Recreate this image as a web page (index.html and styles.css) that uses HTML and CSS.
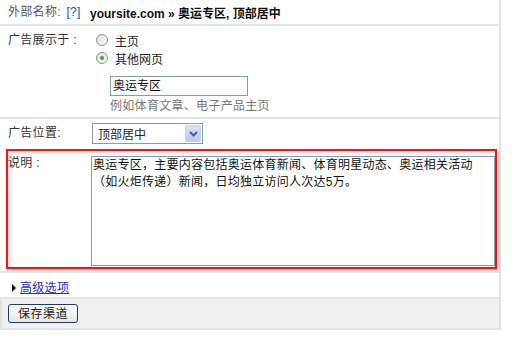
FILE: index.html
```html
<!DOCTYPE html>
<html>
	<head>
		<meta charset="UTF-8">
		<title>渠道设置</title>
		<link rel="stylesheet" href="styles.css">
	</head>
	<body>
		<div class="form">
			<div class="row row-name">
				<div class="label">外部名称: <a class="help">[?]</a></div>
				<div class="title">yoursite.com » 奥运专区, 顶部居中</div>
			</div>
			<div class="row row-show">
				<div class="label">广告展示于 :</div>
				<div class="field">
					<div class="option"><span class="radio"></span>主页</div>
					<div class="option"><span class="radio checked"></span>其他网页</div>
					<div class="input">奥运专区</div>
					<div class="hint">例如体育文章、电子产品主页</div>
				</div>
			</div>
			<div class="row row-pos">
				<div class="label">广告位置:</div>
				<div class="field">
					<div class="select">
						<span class="select-text">顶部居中</span>
						<span class="select-btn">
							<svg width="9" height="6" viewBox="0 0 9 6"><path d="M1 1 L4.5 4.5 L8 1" fill="none" stroke="#4d6185" stroke-width="2"/></svg>
						</span>
					</div>
				</div>
			</div>
			<!-- 红框标注的说明区 -->
			<div class="mark">
				<div class="label">说明 :</div>
				<div class="textarea">奥运专区，主要内容包括奥运体育新闻、体育明星动态、奥运相关活动（如火炬传递）新闻，日均独立访问人次达5万。</div>
			</div>
			<div class="row row-adv">
				<span class="arrow"></span>
				<a class="adv-link">高级选项</a>
			</div>
			<div class="row row-save">
				<button class="btn">保存渠道</button>
			</div>
		</div>
	</body>
</html>
```

FILE: styles.css
```css
*{
	margin: 0;
	padding: 0;
	box-sizing: border-box;
}
body{
	background: #fff;
	font-family: "Liberation Sans", "Noto Sans CJK SC", sans-serif;
	font-size: 12px;
	color: #222;
}
.form{
	width: 501px;
	border-right: 2px solid #e2e2e2;
}
.row{
	display: flex;
	border-bottom: 2px solid #e4e4e4;
}
.label{
	width: 91px;
	padding-left: 8px;
	flex-shrink: 0;
	color: #333;
	line-height: 16px;
	letter-spacing: 0.3px;
}

/* 第一行：名称 */
.row-name{
	height: 26px;
	align-items: center;
}
.row-name .label{
	color: #555;
}
.help{
	color: #1f4ea8;
	margin-left: 2px;
}
.title{
	margin-left: -1px;
	font-weight: bold;
	color: #111;
}

/* 展示位置 */
.row-show{
	padding-top: 5px;
	padding-bottom: 3px;
}
.row-show .label{
	line-height: 18px;
}
.option{
	display: flex;
	align-items: center;
	height: 18px;
	padding-left: 5px;
	color: #222;
}
.radio{
	width: 12px;
	height: 12px;
	border-radius: 50%;
	border: 1px solid #8a8f99;
	background: linear-gradient(135deg, #dcdcdc, #fff);
	margin-right: 7px;
	position: relative;
}
.radio.checked::after{
	content: "";
	position: absolute;
	left: 3px;
	top: 3px;
	width: 4px;
	height: 4px;
	border-radius: 50%;
	background: #2bb02b;
}
.input{
	margin: 9px 0 0 19px;
	width: 138px;
	height: 20px;
	border: 1px solid #7f9db9;
	padding-left: 2px;
	line-height: 18px;
	color: #111;
}
.hint{
	margin: 2px 0 0 19px;
	line-height: 16px;
	color: #777;
	letter-spacing: 0.3px;
}

/* 广告位置 */
.row-pos{
	height: 30px;
	border-bottom: none;
	align-items: flex-start;
}
.row-pos .label{
	padding-top: 6px;
}
.select{
	margin: 4px 0 0 1px;
	width: 111px;
	height: 21px;
	border: 1px solid #7f9db9;
	display: flex;
	align-items: center;
	justify-content: space-between;
	padding: 0 1px 0 5px;
}
.select-btn{
	width: 16px;
	height: 17px;
	background: linear-gradient(#d6e2fd, #b6c9f5);
	border: 1px solid #c2d2f6;
	border-radius: 2px;
	display: flex;
	align-items: center;
	justify-content: center;
}

/* 红框 */
.mark{
	display: flex;
	margin: 0 2px 2px 6px;
	height: 120px;
	border: 2px solid #f11;
	padding-top: 5px;
	box-shadow: 2px 2px 2px rgba(0,0,0,0.25), inset 5px 4px 4px -2px rgba(0,0,0,0.13);
}
.mark .label{
	width: 83px;
	padding-left: 0;
	margin-top: -1px;
}
.textarea{
	flex: 1;
	height: 110px;
	border: 1px solid #7f9db9;
	padding: 0 16px 0 1px;
	line-height: 17px;
	letter-spacing: 0.25px;
	color: #111;
	background: #fff;
}

.row-adv{
	border-top: 2px solid #e4e4e4;
	height: 28px;
	padding-top: 7px;
	align-items: flex-start;
}
.arrow{
	margin: 4px 4px 0 12px;
	border-left: 4px solid #000;
	border-top: 4px solid transparent;
	border-bottom: 4px solid transparent;
}
.adv-link{
	color: #2a2ad0;
	text-decoration: underline;
	line-height: 16px;
	letter-spacing: 0.3px;
}

.row-save{
	background: #f0f0f0;
	height: 31px;
	padding: 5px 0 0 6px;
	border-left: 2px solid #e2e2e2;
}
.btn{
	width: 70px;
	height: 19px;
	border: 1px solid #1c3c6c;
	border-radius: 3px;
	background: linear-gradient(#fff, #e8e6dc);
	font-family: "Liberation Sans", "Noto Sans CJK SC", sans-serif;
	font-size: 12px;
	color: #222;
	line-height: 16px;
	letter-spacing: 0.5px;
}
```
